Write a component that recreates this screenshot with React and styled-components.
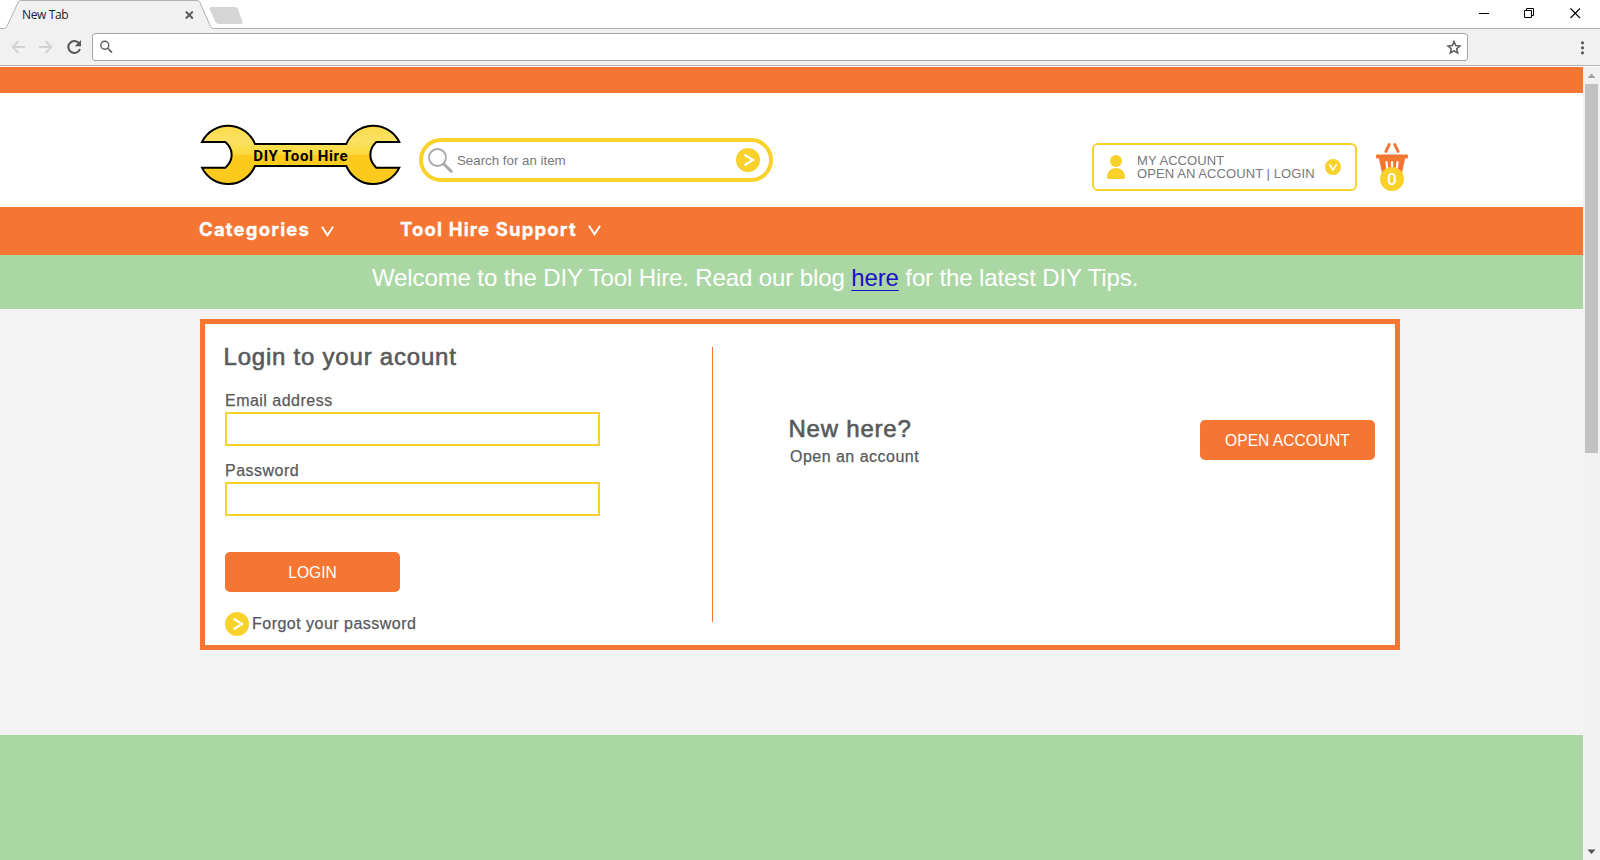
import React from "react";
import styled, { createGlobalStyle } from "styled-components";

const ORANGE = "#f57633";
const YELLOW = "#f8d12a";
const GREEN = "#abd7a4";
const GREY = "#58595b";

const Global = createGlobalStyle`
  * { box-sizing: border-box; }
  body { margin: 0; font-family: "Liberation Sans", Arial, sans-serif; background: #fff; overflow: hidden; }
  svg { display: block; flex: none; }
`;

const Window = styled.div`
  width: 1600px;
  height: 860px;
  display: flex;
  flex-direction: column;
  overflow: hidden;
`;

const TabStrip = styled.div`
  height: 29px;
  display: grid;
  position: relative;
  background: #fff;
  > * { grid-area: 1 / 1; }
`;
const TabRow = styled.div`
  display: flex;
  align-items: flex-start;
  padding: 0 19px 0 22px;
`;
const TabTitle = styled.span`
  width: 163px;
  font: 12px/30px "Open Sans", "Noto Sans", sans-serif;
  letter-spacing: -0.35px;
  color: #222;
`;
const TabClose = styled.svg`
  margin-top: 11px;
`;
const WindowControls = styled.div`
  display: flex;
  gap: 34px;
  margin: 8px 0 0 auto;
`;

const Toolbar = styled.div`
  height: 38px;
  display: flex;
  align-items: flex-start;
  background: #f1f1f1;
  border-bottom: 1px solid #fff;
  box-shadow: inset 0 -1px 0 #b4b4b4;
  padding: 4px 13px 0 11px;
`;
const NavIcons = styled.div`
  display: flex;
  gap: 13px;
  margin-top: 6px;
  width: 81px;
`;
const AddressBar = styled.div`
  width: 1376px;
  height: 28px;
  display: flex;
  align-items: center;
  justify-content: space-between;
  background: #fff;
  border: 1px solid #a6a6a6;
  border-radius: 3px;
  padding: 0 5px 0 6px;
`;
const MenuDots = styled.svg`
  margin: 8px 0 0 auto;
`;

const Viewport = styled.div`
  flex: 1;
  display: flex;
  min-height: 0;
`;
const Page = styled.div`
  width: 1583px;
  display: flex;
  flex-direction: column;
  background: #f3f3f3;
`;
const ScrollBar = styled.div`
  width: 17px;
  display: flex;
  flex-direction: column;
  align-items: center;
  background: #f1f1f1;
`;
const ScrollArrow = styled.svg`
  height: 17px;
`;
const ScrollTrack = styled.div`
  flex: 1;
`;
const ScrollThumb = styled.div`
  width: 13px;
  height: 369px;
  background: #c1c1c1;
`;

const TopStripe = styled.div`
  height: 26px;
  background: ${ORANGE};
`;
const Header = styled.header`
  height: 114px;
  display: flex;
  align-items: flex-start;
  background: #fff;
  padding-left: 200px;
`;
const Logo = styled.svg`
  margin-top: 30px;
`;
const SearchBox = styled.div`
  width: 354px;
  height: 44px;
  margin: 45px 0 0 17px;
  display: flex;
  align-items: center;
  border: 4px solid ${YELLOW};
  border-radius: 22px;
  padding: 0 9px 0 5px;
`;
const SearchText = styled.span`
  flex: 1;
  margin-left: 4px;
  padding-top: 1px;
  font-size: 13.3px;
  line-height: 20px;
  color: #77787b;
`;
const AccountBox = styled.div`
  width: 265px;
  height: 48px;
  margin: 50px 0 0 319px;
  display: flex;
  align-items: center;
  border: 2px solid ${YELLOW};
  border-radius: 6px;
  padding: 0 14px 0 13px;
`;
const AccountText = styled.div`
  flex: 1;
  margin-left: 12px;
  font-size: 13px;
  line-height: 13px;
  letter-spacing: 0.08px;
  color: #77787b;
  white-space: nowrap;
`;
const Basket = styled.svg`
  margin: 49px 0 0 18px;
`;

const NavBar = styled.nav`
  height: 48px;
  display: flex;
  align-items: flex-start;
  background: ${ORANGE};
  padding: 11px 0 0 199px;
`;
const NavItem = styled.div`
  width: ${(p) => p.$width}px;
  display: flex;
  align-items: center;
  color: #fff;
  font: 700 18.5px/23px Inter, sans-serif;
  letter-spacing: ${(p) => p.$spacing}px;
  white-space: nowrap;
`;
const NavLabel = styled.span`
  width: ${(p) => p.$width}px;
  -webkit-text-stroke: 0.3px #fff;
`;
const Chevron = styled.svg`
  margin-top: ${(p) => p.$drop}px;
`;

const Banner = styled.div`
  height: 54px;
  padding-left: 372px;
  background: ${GREEN};
  color: #fff;
  font-size: 24px;
  line-height: 46px;
  letter-spacing: -0.115px;
  white-space: nowrap;
`;
const BannerLink = styled.a`
  color: #1c10c4;
  text-decoration: underline;
  text-decoration-thickness: 1px;
  text-underline-offset: 4px;
`;

const Content = styled.main`
  height: 426px;
  padding: 10px 0 0 200px;
`;
const Card = styled.section`
  width: 1200px;
  height: 331px;
  display: flex;
  background: #fff;
  border: 5px solid ${ORANGE};
`;
const LoginColumn = styled.form`
  width: 507px;
  display: flex;
  flex-direction: column;
  align-items: flex-start;
  padding: 18px 0 0 20px;
`;
const Divider = styled.div`
  width: 1px;
  height: 275px;
  margin-top: 23px;
  background: ${ORANGE};
`;
const SignupColumn = styled.div`
  flex: 1;
  display: flex;
  align-items: flex-start;
  justify-content: space-between;
  padding: 90px 20px 0 76px;
`;
const Title = styled.h2`
  margin: 0 0 ${(p) => p.$gap || 0}px -1.5px;
  color: ${GREY};
  font-size: 24px;
  font-weight: 400;
  line-height: 30px;
  letter-spacing: 0.78px;
  -webkit-text-stroke: 0.6px ${GREY};
  white-space: nowrap;
`;
const Label = styled.label`
  color: ${GREY};
  font-size: 16px;
  line-height: 20px;
  letter-spacing: 0.48px;
  -webkit-text-stroke: 0.25px ${GREY};
  white-space: nowrap;
`;
const Field = styled.div`
  display: flex;
  flex-direction: column;
  margin-top: ${(p) => p.$top}px;
`;
const Input = styled.input`
  width: 375px;
  height: 34px;
  margin-top: 1px;
  background: #fff;
  border: 2px solid ${YELLOW};
  border-radius: 0;
  outline: none;
`;
const Button = styled.button`
  width: 175px;
  height: 40px;
  margin: ${(p) => p.$top || 0}px 0 0;
  padding: 2px 0 0;
  border: 0;
  border-radius: 5px;
  background: ${ORANGE};
  color: #fff;
  font: 15.6px/20px "Liberation Sans", Arial, sans-serif;
`;
const ForgotRow = styled.div`
  display: flex;
  align-items: center;
  gap: 3px;
  margin-top: 20px;
`;
const SignupText = styled.div`
  display: flex;
  flex-direction: column;
  padding-left: 1px;
`;
const Footer = styled.footer`
  flex: 1;
  background: ${GREEN};
`;

const GoIcon = () => (
  <svg width="24" height="24" viewBox="0 0 24 24">
    <circle cx="12" cy="12" r="12" fill={YELLOW} />
    <path d="M8.500 6.800 17 12 8.500 17.200" fill="none" stroke="#fff" strokeWidth="2.200" />
  </svg>
);

const MenuChevron = ({ drop }) => (
  <Chevron $drop={drop} width="13" height="11" viewBox="0 0 13 11">
    <path d="M1 .8 6.500 9.200 12 .8" fill="none" stroke="#fff" strokeWidth="2" />
  </Chevron>
);

export default function App() {
  return (
    <Window>
      <Global />
      <TabStrip>
        <svg width="1600" height="29" viewBox="0 0 1600 29">
          <path d="M6 29 18.500 2Q19 .5 21 .5H197Q199 .5 199.500 2L212 29Z" fill="#f1f1f1" />
          <path d="M0 28.500H4Q6 28.500 6.800 26.500L18 2.500Q19 .5 21 .5H197Q199 .5 200 2.500L210.500 26.500Q211.500 28.500 214 28.500H1600" fill="none" stroke="#b0b0b0" />
          <path d="M211.500 7H235Q237 7 238 9L242.500 22Q243 24 241 24H219Q216.500 24 215.500 22L209.500 9Q209 7 211.500 7Z" fill="#d5d5d5" />
        </svg>
        <TabRow>
          <TabTitle>New Tab</TabTitle>
          <TabClose width="9" height="9" viewBox="0 0 9 9">
            <path d="M.8 .5 7.800 7.500M7.800 .5 .8 7.500" stroke="#5a5a5a" strokeWidth="1.900" />
          </TabClose>
          <WindowControls>
            <svg width="11" height="11" viewBox="0 0 11 11"><path d="M0 5.500H10" stroke="#000" /></svg>
            <svg width="11" height="11" viewBox="0 0 11 11">
              <path d="M.5 2.500H7.500V9.500H.5ZM2.500 2.500V.5H9.500V7.500H7.500" fill="none" stroke="#000" />
            </svg>
            <svg width="12" height="11" viewBox="-1 0 12 11"><path d="M.5.5 10 10M10 .5.5 10" stroke="#000" strokeWidth="1.100" /></svg>
          </WindowControls>
        </TabRow>
      </TabStrip>

      <Toolbar>
        <NavIcons>
          <svg width="15" height="16" viewBox="0 0 15 16">
            <path d="M14 8H1.800M7.500 2 1.500 8 7.500 14" fill="none" stroke="#d2d2d2" strokeWidth="1.800" />
          </svg>
          <svg width="15" height="16" viewBox="0 0 15 16">
            <path d="M0 8H12.200M6.500 2 12.500 8 6.500 14" fill="none" stroke="#d2d2d2" strokeWidth="1.800" />
          </svg>
          <svg width="16" height="16" viewBox="0 0 16 16">
            <path d="M12 4.200A6 6 0 1 0 13 10" fill="none" stroke="#555" strokeWidth="2" />
            <path d="M14 1V7.200H7.800Z" fill="#555" />
          </svg>
        </NavIcons>
        <AddressBar>
          <svg width="14" height="14" viewBox="0 0 14 14">
            <circle cx="5.800" cy="5.300" r="4" fill="none" stroke="#5a5a5a" strokeWidth="1.400" />
            <path d="M8.700 8.200 13 12.600" stroke="#5a5a5a" strokeWidth="1.600" />
          </svg>
          <svg width="16" height="15" viewBox="0 0 16 15">
            <path d="M8 1.600 9.700 5.600 14 6 10.700 8.800 11.700 13 8 10.800 4.300 13 5.300 8.800 2 6 6.300 5.600Z" fill="none" stroke="#5a5a5a" strokeWidth="1.500" />
          </svg>
        </AddressBar>
        <MenuDots width="10" height="16" viewBox="0 0 10 16">
          <circle cx="5.500" cy="1.800" r="1.600" fill="#5a5a5a" />
          <circle cx="5.500" cy="6.800" r="1.600" fill="#5a5a5a" />
          <circle cx="5.500" cy="11.800" r="1.600" fill="#5a5a5a" />
        </MenuDots>
      </Toolbar>

      <Viewport>
        <Page>
          <TopStripe />
          <Header>
            <Logo width="202" height="64" viewBox="31 39 606 192">
              <defs>
                <linearGradient id="metal" x1="0" y1="0" x2="0" y2="1">
                  <stop offset="0" stopColor="#fadb48" />
                  <stop offset=".25" stopColor="#fce163" />
                  <stop offset=".49" stopColor="#fbd93c" />
                  <stop offset=".51" stopColor="#fbca1c" />
                  <stop offset="1" stopColor="#fbca1c" />
                </linearGradient>
              </defs>
              <path
                d="M37 96A87 87 0 0 1 196 102H470A87 87 0 0 1 629 96H560Q542 112 542 134 542 156 560 173H629A87 87 0 0 1 470 168H196A87 87 0 0 1 37 173H107Q126 156 126 134 126 112 107 96Z"
                fill="url(#metal)" stroke="#000" strokeWidth="6"
              />
              <text x="191" y="152" textLength="283" fontFamily="Roboto, sans-serif" fontWeight="700" fontSize="45" fill="#000">DIY Tool Hire</text>
            </Logo>
            <SearchBox>
              <svg width="25" height="25" viewBox="0 0 25 25">
                <circle cx="9.500" cy="9.500" r="8.500" fill="none" stroke="#a7a9ac" strokeWidth="1.800" />
                <path d="M15.800 16 23.200 23.300" stroke="#a7a9ac" strokeWidth="3" strokeLinecap="round" />
              </svg>
              <SearchText>Search for an item</SearchText>
              <GoIcon />
            </SearchBox>
            <AccountBox>
              <svg width="18" height="24" viewBox="0 0 18 24">
                <circle cx="9" cy="6" r="6" fill={YELLOW} />
                <path d="M0 22C0 17 3.500 13 9 13S18 17 18 22Q18 24 16 24H2Q0 24 0 22Z" fill={YELLOW} />
              </svg>
              <AccountText>
                <div>MY ACCOUNT</div>
                <div>OPEN AN ACCOUNT | LOGIN</div>
              </AccountText>
              <svg width="16" height="16" viewBox="0 0 16 16">
                <circle cx="8" cy="8" r="8" fill={YELLOW} />
                <path d="M4.500 5.300 8 11 11.500 5.300" fill="none" stroke="#fff" strokeWidth="1.700" />
              </svg>
            </AccountBox>
            <Basket width="34" height="50" viewBox="0 0 34 50">
              <path d="M10.800 9.500 14.300 2.500M19.700 2.500 23.200 9.500" stroke={ORANGE} strokeWidth="2.800" strokeLinecap="round" />
              <path d="M2 12.500H32Q33 12.500 33 13.500V15Q33 16.500 31.800 16.500H30L27 31H7L4 16.500H2.200Q1 16.500 1 15V13.500Q1 12.500 2 12.500Z" fill={ORANGE} />
              <path d="M11.500 20 12.200 27M17 20V27M22.500 20 21.800 27" stroke="#fff" strokeWidth="2.200" strokeLinecap="round" />
              <circle cx="17" cy="37" r="12" fill={YELLOW} />
              <text x="17" y="43" textAnchor="middle" fontFamily="Roboto, sans-serif" fontWeight="500" fontSize="16.500" fill="#fff">0</text>
            </Basket>
          </Header>
          <NavBar>
            <NavItem $width={201} $spacing={1.2}>
              <NavLabel $width={122}>Categories</NavLabel>
              <MenuChevron drop={3} />
            </NavItem>
            <NavItem $width={210} $spacing={1.15}>
              <NavLabel $width={188}>Tool Hire Support</NavLabel>
              <MenuChevron drop={1} />
            </NavItem>
          </NavBar>
          <Banner>
            Welcome to the DIY Tool Hire. Read our blog <BannerLink>here</BannerLink> for the latest DIY Tips.
          </Banner>
          <Content>
            <Card>
              <LoginColumn>
                <Title>Login to your acount</Title>
                <Field $top={19}>
                  <Label>Email address</Label>
                  <Input />
                </Field>
                <Field $top={15}>
                  <Label>Password</Label>
                  <Input type="password" />
                </Field>
                <Button type="button" $top={36}>LOGIN</Button>
                <ForgotRow>
                  <GoIcon />
                  <Label as="span">Forgot your password</Label>
                </ForgotRow>
              </LoginColumn>
              <Divider />
              <SignupColumn>
                <SignupText>
                  <Title $gap={3}>New here?</Title>
                  <Label as="span">Open an account</Label>
                </SignupText>
                <Button type="button" $top={6}>OPEN ACCOUNT</Button>
              </SignupColumn>
            </Card>
          </Content>
          <Footer />
        </Page>
        <ScrollBar>
          <ScrollArrow width="17" viewBox="0 0 17 17"><path d="M4.500 11 8.500 6.500 12.500 11Z" fill="#a3a3a3" /></ScrollArrow>
          <ScrollTrack><ScrollThumb /></ScrollTrack>
          <ScrollArrow width="17" viewBox="0 0 17 17"><path d="M4.500 6.500 8.500 11 12.500 6.500Z" fill="#505050" /></ScrollArrow>
        </ScrollBar>
      </Viewport>
    </Window>
  );
}
